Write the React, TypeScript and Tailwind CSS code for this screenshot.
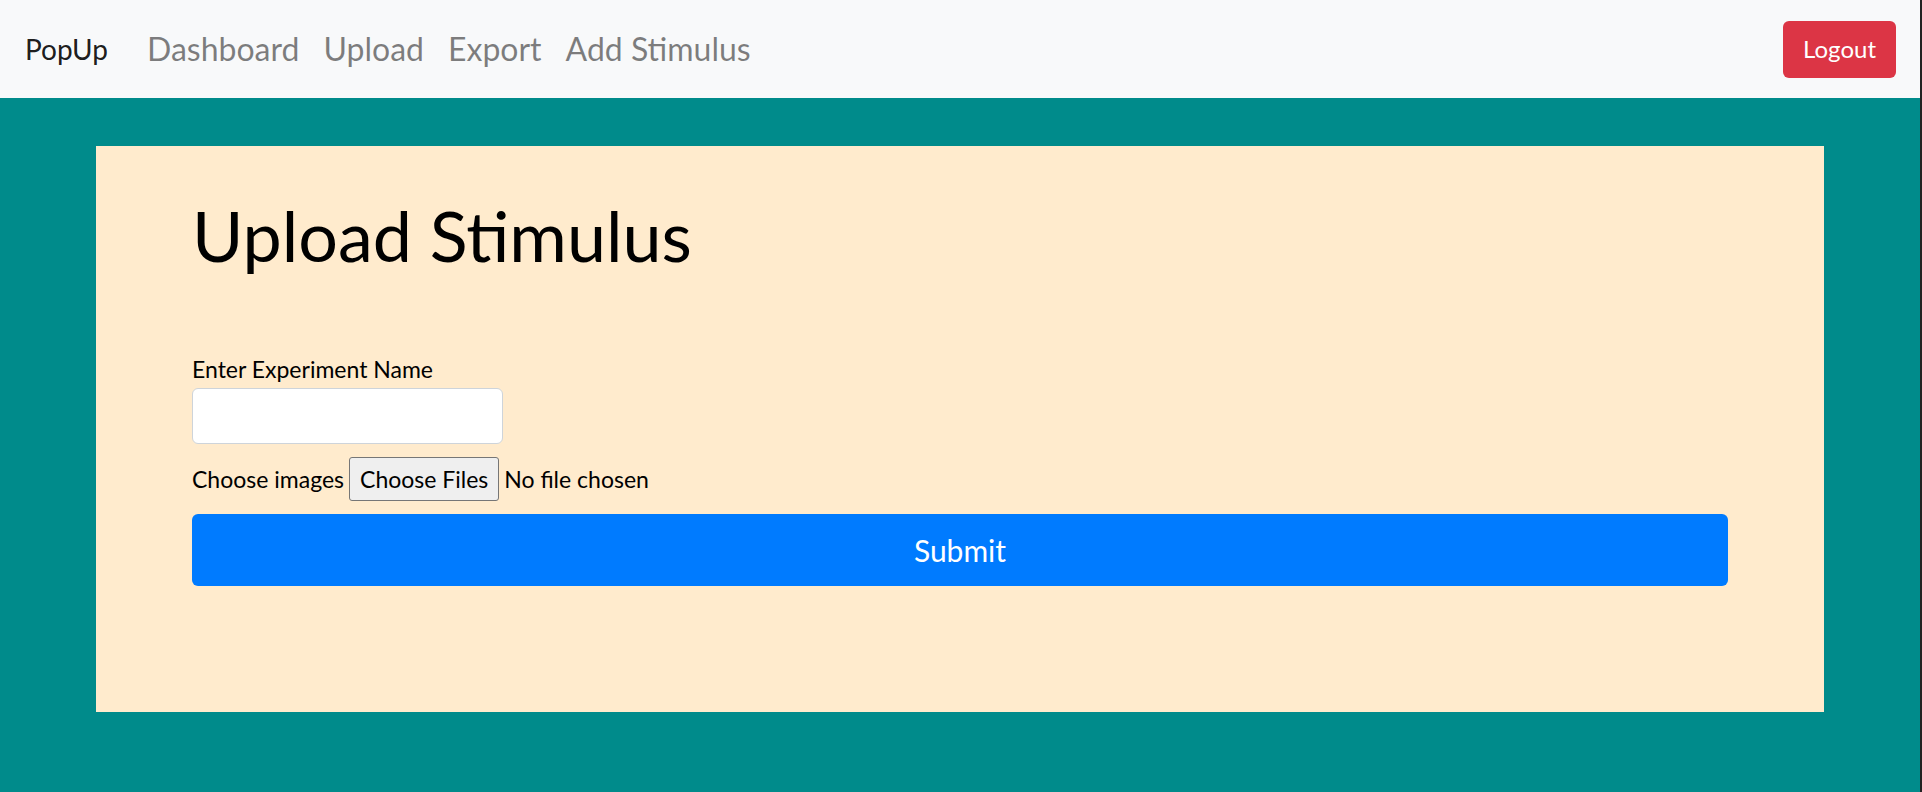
import React from 'react'

const links = ['Dashboard', 'Upload', 'Export', 'Add Stimulus']

const App = () => {
  return (
    <div className="flex min-h-screen w-[1922px] font-['Lato','Noto_Sans',sans-serif]">
      <div className="w-[1920px] bg-[#008b8b]">
        <nav className="flex h-[98px] items-center justify-between bg-[#f8f9fa] pl-[25px] pr-6">
          <div className="flex items-center">
            <a href="#" className="mr-[27px] text-[28px] text-black/90">
              PopUp
            </a>
            {links.map((l) => (
              <a key={l} href="#" className="px-3 text-[32px] text-black/50">
                {l}
              </a>
            ))}
          </div>
          <button className="h-[57px] rounded-md bg-[#dc3545] px-5 text-[24px] text-white">
            Logout
          </button>
        </nav>

        <div className="px-24 pt-12 pb-20">
          <div className="bg-[#ffebcd] px-24 pt-[46px] pb-[126px]">
            <h1 className="text-[70px] leading-[86px] font-normal text-black">Upload Stimulus</h1>
            <form className="mt-[73px] flex flex-col">
              <label className="text-[23px] leading-[36px] text-black">Enter Experiment Name</label>
              <input
                type="text"
                className="mt-px h-[56px] w-[311px] rounded-md border border-[#ced4da] bg-white px-3 text-[23px]"
              />
              <div className="mt-[13px] flex h-[44px] items-center text-[23px] text-black">
                <span>Choose images</span>
                <span className="ml-[5px] flex h-[44px] items-center rounded-[3px] border border-[#767676] bg-[#efefef] px-[10px]">
                  Choose Files
                </span>
                <span className="ml-[5px]">No file chosen</span>
              </div>
              <button
                type="button"
                className="mt-[13px] h-[72px] w-full rounded-md bg-[#007bff] text-[30px] text-white"
              >
                Submit
              </button>
            </form>
          </div>
        </div>
      </div>
      <div className="w-[2px] bg-[#222]" />
    </div>
  )
}

export default App
